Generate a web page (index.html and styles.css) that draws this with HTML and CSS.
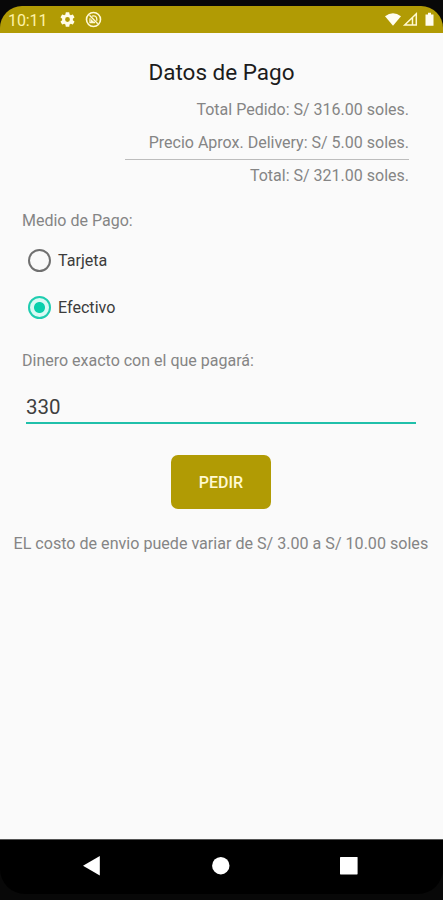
FILE: index.html
```html
<!DOCTYPE html>
<html lang="es">
<head>
<meta charset="utf-8">
<title>Datos de Pago</title>
<link rel="stylesheet" href="styles.css">
</head>
<body>
<div class="phone">
  <header class="status">
    <span class="clock">10:11</span>
    <svg class="gear" viewBox="2 2 20 20" width="15" height="15"><path fill="#fffce8" fill-rule="evenodd" d="M19.14 12.94a7 7 0 0 0 0-1.88l2.03-1.58a.5.5 0 0 0 .12-.61l-1.92-3.32a.5.5 0 0 0-.59-.22l-2.39.96a7 7 0 0 0-1.62-.94l-.36-2.54A.5.5 0 0 0 13.92 2.4h-3.84a.5.5 0 0 0-.47.41l-.36 2.54a7 7 0 0 0-1.62.94l-2.39-.96a.5.5 0 0 0-.59.22L2.74 8.87a.5.5 0 0 0 .12.61l2.03 1.58a7 7 0 0 0 0 1.88l-2.03 1.58a.5.5 0 0 0-.12.61l1.92 3.32c.12.22.37.29.59.22l2.39-.96a7 7 0 0 0 1.62.94l.36 2.54c.05.24.24.41.47.41h3.84c.24 0 .44-.17.47-.41l.36-2.54a7 7 0 0 0 1.62-.94l2.39.96c.22.08.47 0 .59-.22l1.92-3.32a.5.5 0 0 0-.12-.61zM12 15.2a3.2 3.2 0 1 1 0-6.4 3.2 3.2 0 0 1 0 6.4z"/></svg>
    <svg class="blocked" viewBox="0 0 17 17" width="17" height="17" fill="none" stroke="#fff9d5"><circle cx="8.500" cy="8.500" r="7" stroke-width="1.600"/><path d="M4.500 4.200l8.300 8.600" stroke-width="1.400"/><path d="M7 5.200c2.800-1.200 4.800.4 4.800 3v1.600M5 7.300v4.200h5" stroke-width="1.300"/><path d="M6 8l3.500 3.500H6z" fill="#fff9d5" stroke="none"/></svg>
    <svg class="signals" viewBox="0 0 54 16" width="54" height="16"><path fill="#fffdf0" d="M1 4.200Q9 -1.800 17 4.200L9 13.800Z"/><path fill="none" stroke="#fff9d0" stroke-width="1.500" d="M20.700 13L32.300 1.800V13ZM28.500 6v7"/><path fill="#fffdf0" d="M41.500 2.500h2.500V.7h3v1.800h2.500v11.300h-8z"/></svg>
  </header>
  <main class="screen">
    <h1>Datos de Pago</h1>
    <section class="totals">
      <p>Total Pedido: S/ 316.00 soles.</p>
      <p>Precio Aprox. Delivery: S/ 5.00 soles.</p>
      <p class="sum">Total: S/ 321.00 soles.</p>
    </section>
    <p class="label">Medio de Pago:</p>
    <div class="option"><i class="radio"></i><span>Tarjeta</span></div>
    <div class="option"><i class="radio on"></i><span>Efectivo</span></div>
    <p class="label exact">Dinero exacto con el que pagará:</p>
    <div class="field">330</div>
    <button class="order">PEDIR</button>
    <p class="note">EL costo de envio puede variar de S/ 3.00 a S/ 10.00 soles</p>
  </main>
  <nav class="nav">
    <svg viewBox="0 0 443 54" width="443" height="54" fill="#fff"><path d="M83 25.700L99.800 16V35.500Z"/><circle cx="220.800" cy="25.700" r="8.700"/><rect x="340" y="17" width="17.600" height="17.400" rx=".6"/></svg>
  </nav>
</div>
</body>
</html>
```
FILE: styles.css
```css
* { box-sizing: border-box; }
body { margin: 0; background: #080808; font-family: Roboto, "Liberation Sans", sans-serif; }
p, h1 { margin: 0; font-weight: 400; white-space: nowrap; }
.phone { width: 443px; height: 900px; padding-top: 6px; display: flex; flex-direction: column; overflow: hidden; }
.status { height: 27px; background: #b19b04; border-radius: 22px 22px 0 0; display: flex; align-items: center; padding-left: 8px; }
.clock { width: 52px; padding-top: 2px; color: #fff3a8; font-size: 16px; line-height: 25px; letter-spacing: -0.1px; }
.blocked { margin-left: 10px; }
.signals { margin-left: auto; margin-right: 5px; }
.screen { height: 806px; background: #fafafa; display: flex; flex-direction: column; color: #858585; font-size: 16.100px; }
h1 { margin-top: 24px; text-align: center; font-size: 22.500px; line-height: 30px; color: #1c1c1c; }
.totals { width: 284px; margin: 6px 0 0 125px; text-align: right; font-size: 16px; }
.totals p { height: 33px; line-height: 33px; }
.totals .sum { border-top: 1px solid #bdbdbd; line-height: 32px; }
.label { margin: 11px 0 0 22px; height: 33px; line-height: 35px; font-size: 16px; }
.option { height: 48px; margin-left: 28px; display: flex; align-items: center; gap: 7px; color: #3c3c3c; }
.option + .option { height: 47px; }
.radio { width: 23px; height: 23px; border: 2px solid #707070; border-radius: 50%; }
.radio.on { border-color: #1fcdb0; background: radial-gradient(circle, #08d0ac 0 5px, #d9faf4 6px 100%); }
.exact { margin-top: 12px; }
.field { margin: 13px 27px 0 26px; height: 35px; border-bottom: 2px solid #20c0aa; color: #3f3f3f; font-size: 20.500px; line-height: 37px; }
.order { width: 100px; height: 54px; margin: 31px 0 0 171px; padding: 0; border: 0; border-radius: 7px; background: #b19b04; color: #fff9d2; font: 500 16px Roboto, sans-serif; }
.note { margin: 18px 0 0 13.500px; height: 33px; line-height: 33px; }
.nav { flex: none; height: 55px; border-top: 1px solid #555; background: #000; border-radius: 0 0 25px 25px; }
```
